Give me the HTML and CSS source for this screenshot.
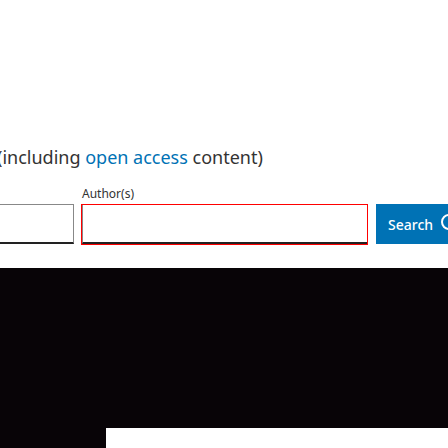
FILE: index.html
```
<!DOCTYPE html>
<html lang="en">
<head>
<meta charset="utf-8">
<title>Search</title>
<link rel="stylesheet" href="styles.css">
</head>
<body>
<main class="search">
  <p class="intro">(including <a href="#">open access</a> content)</p>
  <form class="form">
    <input class="keywords" type="text" aria-label="Keywords">
    <div class="field">
      <label for="author">Author(s)</label>
      <div class="ring"><input id="author" type="text"></div>
    </div>
    <button class="submit" type="button">
      <span>Search</span>
      <svg class="icon" viewBox="0 0 20 20" aria-hidden="true"><circle cx="8" cy="8" r="7"/><path d="M13 13l6 6"/></svg>
    </button>
  </form>
</main>
<section class="hero"><div class="panel"></div></section>
</body>
</html>
```
FILE: styles.css
```
* { box-sizing: border-box; }
body {
  margin: 0;
  min-height: 100vh;
  display: flex;
  flex-direction: column;
  overflow: hidden;
  background: #fff;
  color: #333;
  font-family: "Noto Sans", "Open Sans", sans-serif;
}
.search { padding: 144px 0 23px; }
.intro {
  margin: 0 0 16px -3px;
  font-size: 18px;
  line-height: 26px;
  white-space: nowrap;
}
.intro a { color: #0072b5; text-decoration: none; }
.form {
  display: grid;
  grid-template-columns: 74px minmax(0, 1fr) 72px;
  column-gap: 8px;
  align-items: end;
}
.form input {
  display: block;
  width: 100%;
  padding: 0 8px;
  border: 0 solid #888;
  border-radius: 0;
  border-bottom: 2px solid #222;
  background: #fff;
  font: inherit;
  outline: 0;
}
.form .keywords {
  height: 40px;
  margin-bottom: 1px;
  border-top-width: 1px;
  border-right-width: 1px;
}
.field label {
  display: block;
  font-size: 12px;
  line-height: 16px;
  margin-bottom: 2px;
}
.ring { margin-left: -1px; border: 1px solid #f00; }
.ring input { height: 39px; border-left-width: 1px; }
.submit {
  display: flex;
  align-items: center;
  gap: 8px;
  height: 40px;
  margin-bottom: 1px;
  padding: 0 0 0 12px;
  border: 0;
  overflow: hidden;
  background: #0072b5;
  color: #fff;
  font: 500 14px "Noto Sans", "Open Sans", sans-serif;
}
.icon {
  flex: none;
  width: 20px;
  height: 20px;
  fill: none;
  stroke: #fff;
  stroke-width: 2;
}
.hero {
  flex: 1;
  display: flex;
  padding: 160px 0 0 106px;
  background: #080407;
}
.panel { flex: 1; min-height: 20px; background: #fff; }
```
